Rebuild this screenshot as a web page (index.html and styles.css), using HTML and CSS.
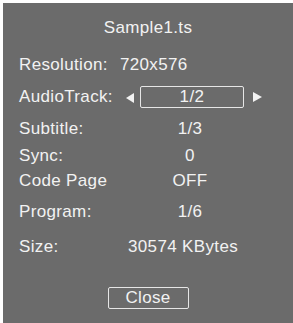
FILE: index.html
```html
<!DOCTYPE html>
<html>
<head>
<meta charset="utf-8">
<link rel="stylesheet" href="styles.css">
</head>
<body>
<div class="panel">
  <div class="title">Sample1.ts</div>
  <div class="row row-inline">
    <span class="label">Resolution:</span>
    <span class="value-inline">720x576</span>
  </div>
  <div class="row row-audio">
    <span class="label">AudioTrack:</span>
    <svg class="arrow arrow-left" width="8" height="10" viewBox="0 0 8 10"><polygon points="8,0 8,10 0,5" fill="#f2f2f2"/></svg>
    <span class="select">1/2</span>
    <svg class="arrow arrow-right" width="9" height="10" viewBox="0 0 9 10"><polygon points="0,0 0,10 9,5" fill="#f2f2f2"/></svg>
  </div>
  <div class="row">
    <span class="label">Subtitle:</span>
    <span class="value">1/3</span>
  </div>
  <div class="row">
    <span class="label">Sync:</span>
    <span class="value">0</span>
  </div>
  <div class="row">
    <span class="label">Code Page</span>
    <span class="value">OFF</span>
  </div>
  <div class="row">
    <span class="label">Program:</span>
    <span class="value">1/6</span>
  </div>
  <div class="row">
    <span class="label">Size:</span>
    <span class="value value-left">30574 KBytes</span>
  </div>
  <div class="actions">
    <span class="button">Close</span>
  </div>
</div>
</body>
</html>
```

FILE: styles.css
```css
html, body {
  margin: 0;
  padding: 0;
  background: #ffffff;
}

.panel {
  margin: 3px 0 0 3px;
  width: 290px;
  height: 320px;
  box-sizing: border-box;
  padding-top: 15px;
  background: #6b6b6b;
  color: #f2f2f2;
  font-family: "Liberation Sans", Arial, sans-serif;
  font-size: 17px;
  line-height: 20px;
  letter-spacing: 0.35px;
  display: grid;
  grid-template-rows: 37px 31px 33px 27px 25px 31px 35px 50px auto;
}

.title {
  text-align: center;
}

.row {
  display: grid;
  grid-template-columns: 109px 124px;
  padding-left: 16px;
  align-items: start;
}

.value {
  text-align: center;
}

.value-left {
  text-align: left;
}

.row-inline {
  display: flex;
  gap: 12px;
}

.row-audio {
  display: flex;
  align-items: center;
  align-self: start;
  height: 22px;
}

.arrow {
  display: block;
}

.arrow-left {
  margin-left: 13px;
  margin-top: 1px;
}

.select {
  width: 104px;
  height: 22px;
  box-sizing: border-box;
  margin-left: 6px;
  border: 1px solid #e6e6e6;
  border-radius: 2px;
  text-align: center;
  line-height: 20px;
}

.arrow-right {
  margin-left: 9px;
}

.actions {
  display: flex;
  justify-content: center;
  align-items: start;
}

.button {
  width: 81px;
  height: 22px;
  box-sizing: border-box;
  border: 1px solid #e6e6e6;
  border-radius: 2px;
  text-align: center;
  line-height: 20px;
}
```
